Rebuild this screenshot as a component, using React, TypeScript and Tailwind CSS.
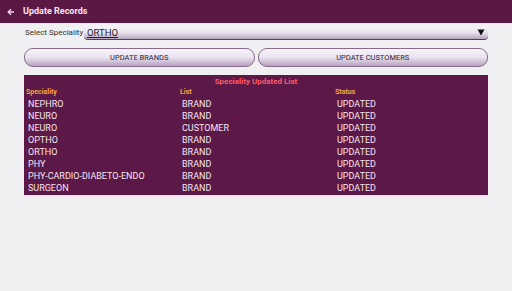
import React from "react";

const rows = [
  ["NEPHRO", "BRAND", "UPDATED"],
  ["NEURO", "BRAND", "UPDATED"],
  ["NEURO", "CUSTOMER", "UPDATED"],
  ["OPTHO", "BRAND", "UPDATED"],
  ["ORTHO", "BRAND", "UPDATED"],
  ["PHY", "BRAND", "UPDATED"],
  ["PHY-CARDIO-DIABETO-ENDO", "BRAND", "UPDATED"],
  ["SURGEON", "BRAND", "UPDATED"],
];

export default function App() {
  return (
    <div
      className="w-[512px] h-[291px] bg-[#f0eff1] overflow-hidden"
      style={{ fontFamily: "Roboto, 'Liberation Sans', sans-serif" }}
    >
      <div className="h-[23px] bg-[#5b1845] flex items-center pl-[7px]">
        <svg width="8" height="8" viewBox="0 0 8 8" className="mr-[8px]">
          <path d="M7 4H1.5M4 1.2L1.2 4L4 6.8" stroke="#f6d6ea" strokeWidth="1.3" fill="none" />
        </svg>
        <span className="text-[9px] font-bold text-[#f8e4f2]">Update Records</span>
      </div>
      <div className="px-[24px]">
        <div className="flex items-center mt-[3px] h-[14px]">
          <span className="text-[8px] text-[#333] w-[60px] pl-[1px]">Select Speciality</span>
          <div className="flex-1 h-[14px] rounded-[4px] bg-gradient-to-b from-[#f4f2f8] via-[#e9e4ee] to-[#b7a6bf] border-b border-[#5b3a5e] flex items-center justify-between px-[3px]">
            <span className="text-[9.5px] text-[#2a1a2a] underline leading-none">ORTHO</span>
            <svg width="8" height="7" viewBox="0 0 8 7">
              <path d="M0.5 0.5H7.5L4 6.5Z" fill="#111" />
            </svg>
          </div>
        </div>
        <div className="flex gap-[3px] mt-[8px] h-[19px]">
          <div className="flex-1 rounded-[9px] border border-[#8a6a8a] bg-gradient-to-b from-[#f7f5fa] via-[#e8e1ef] to-[#b8a2c0] flex items-center justify-center text-[7.5px] text-[#2c2230]">
            UPDATE BRANDS
          </div>
          <div className="flex-1 rounded-[9px] border border-[#8a6a8a] bg-gradient-to-b from-[#f7f5fa] via-[#e8e1ef] to-[#b8a2c0] flex items-center justify-center text-[7.5px] text-[#2c2230]">
            UPDATE CUSTOMERS
          </div>
        </div>
        <div className="mt-[8px] bg-[#5c1846] pb-[1px] shadow-[0_2px_0_#f7e4f1]">
          <div className="text-center text-[8px] font-bold text-[#ff5b66] h-[12px] leading-[12px] pt-[1px]">
            Speciality Updated List
          </div>
          <div className="grid grid-cols-[154px_155px_1fr] h-[11px] items-center text-[7px] font-bold text-[#f7a43e] pl-[2px]">
            <span>Speciality</span>
            <span>List</span>
            <span>Status</span>
          </div>
          {rows.map((r, i) => (
            <div key={i} className="grid grid-cols-[154px_155px_1fr] h-[12px] items-center text-[9px] text-[#f6e6f2] pl-[4px] leading-none">
              <span>{r[0]}</span>
              <span>{r[1]}</span>
              <span>{r[2]}</span>
            </div>
          ))}
        </div>
      </div>
    </div>
  );
}
